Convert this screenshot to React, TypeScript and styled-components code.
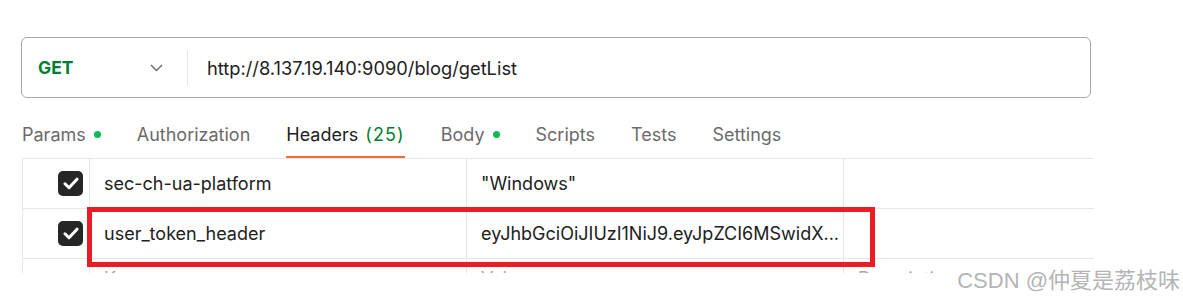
import styled, { createGlobalStyle } from "styled-components";

const GlobalStyle = createGlobalStyle`
  html, body {
    margin: 0;
    padding: 0;
    background: #ffffff;
  }
  body {
    font-family: Inter, "Noto Sans", sans-serif;
    color: #212121;
  }
`;

const Page = styled.div`
  position: relative;
  width: 1183px;
  height: 302px;
  padding: 37px 0 0 21px;
  box-sizing: border-box;
  overflow: hidden;
`;

const UrlBar = styled.div`
  width: 1070px;
  height: 61px;
  box-sizing: border-box;
  border: 1px solid #a8a8a8;
  border-radius: 6px;
  display: flex;
  align-items: center;
`;

const MethodSelect = styled.div`
  width: 166px;
  height: 35px;
  box-sizing: border-box;
  padding: 0 24px 0 16px;
  border-right: 1px solid #e2e2e2;
  display: flex;
  align-items: center;
  justify-content: space-between;
`;

const Method = styled.span`
  font-size: 17.5px;
  font-weight: 700;
  color: #007f31;
`;

const UrlText = styled.span`
  margin-left: 19px;
  font-size: 18.3px;
  color: #212121;
`;

const TabBar = styled.div`
  display: flex;
  gap: 36px;
  margin: 16px 0 0 1px;
  height: 44px;
`;

const Tab = styled.div<{ $active?: boolean }>`
  display: flex;
  align-items: center;
  gap: 8px;
  font-size: 18px;
  color: ${(p) => (p.$active ? "#212121" : "#6b6b6b")};
  box-sizing: border-box;
  border-bottom: 2px solid ${(p) => (p.$active ? "#f26b3a" : "transparent")};
  padding-bottom: 2px;
`;

const Count = styled.span`
  margin-left: 7px;
  letter-spacing: 1.1px;
  color: #007f31;
`;

const Dot = styled.span`
  width: 7px;
  height: 7px;
  border-radius: 50%;
  background: #0cbb52;
`;

const Table = styled.div`
  margin-left: 1px;
  width: 1071px;
  height: 114px;
  overflow: hidden;
  border-top: 1px solid #e6e6e6;
  border-left: 1px solid #e6e6e6;
`;

const Row = styled.div`
  display: grid;
  grid-template-columns: 67px 377px 377px 250px;
  height: 49px;
  border-bottom: 1px solid #e6e6e6;
`;

const Cell = styled.div<{ $muted?: boolean }>`
  display: flex;
  height: 100%;
  box-sizing: border-box;
  padding: ${(p) => (p.$muted ? "9px 14px 0" : "0 14px")};
  align-items: ${(p) => (p.$muted ? "flex-start" : "center")};
  border-right: 1px solid #e6e6e6;
  font-size: 18px;
  color: ${(p) => (p.$muted ? "#a6a6a6" : "#212121")};
  white-space: nowrap;
  overflow: hidden;

  &:last-child {
    border-right: none;
  }
`;

const CheckCell = styled.div`
  display: flex;
  align-items: center;
  height: 100%;
  padding-left: 35px;
  border-right: 1px solid #e6e6e6;
`;

const Checkbox = styled.span`
  width: 25px;
  height: 25px;
  border-radius: 5px;
  background: #262626;
  display: flex;
  align-items: center;
  justify-content: center;
`;

const Highlight = styled.div`
  position: absolute;
  left: 87px;
  top: 207px;
  width: 788px;
  height: 60px;
  box-sizing: border-box;
  border: 5px solid #ec1c24;
`;

const Watermark = styled.div`
  position: absolute;
  right: 3px;
  bottom: 8px;
  font-family: "Liberation Sans", "Noto Sans CJK SC", sans-serif;
  font-size: 22px;
  color: #b4b4b4;
`;

const Chevron = () => (
  <svg width="13" height="8" viewBox="0 0 13 8" fill="none">
    <path d="M1 1l5.5 5.5L12 1" stroke="#6b6b6b" strokeWidth="1.4" />
  </svg>
);

const Check = () => (
  <svg width="16" height="13" viewBox="0 0 16 13" fill="none">
    <path
      d="M2 6.8l4 4L14 2.2"
      stroke="#ffffff"
      strokeWidth="3"
      strokeLinecap="round"
      strokeLinejoin="round"
    />
  </svg>
);

const headers = [
  { key: "sec-ch-ua-platform", value: '"Windows"' },
  {
    key: "user_token_header",
    value: "eyJhbGciOiJIUzI1NiJ9.eyJpZCI6MSwidX...",
  },
];

const App = () => {
  return (
    <Page>
      <GlobalStyle />
      <UrlBar>
        <MethodSelect>
          <Method>GET</Method>
          <Chevron />
        </MethodSelect>
        <UrlText>http://8.137.19.140:9090/blog/getList</UrlText>
      </UrlBar>
      <TabBar>
        <Tab>
          Params <Dot />
        </Tab>
        <Tab>Authorization</Tab>
        <Tab $active>
          <span>
            Headers<Count>(25)</Count>
          </span>
        </Tab>
        <Tab>
          Body <Dot />
        </Tab>
        <Tab>Scripts</Tab>
        <Tab>Tests</Tab>
        <Tab>Settings</Tab>
      </TabBar>
      <Table>
        {headers.map((h) => (
          <Row key={h.key}>
            <CheckCell>
              <Checkbox>
                <Check />
              </Checkbox>
            </CheckCell>
            <Cell>{h.key}</Cell>
            <Cell>{h.value}</Cell>
            <Cell />
          </Row>
        ))}
        <Row>
          <CheckCell />
          <Cell $muted>Key</Cell>
          <Cell $muted>Value</Cell>
          <Cell $muted>Description</Cell>
        </Row>
      </Table>
      <Highlight />
      <Watermark>CSDN @仲夏是荔枝味</Watermark>
    </Page>
  );
};

export default App;
